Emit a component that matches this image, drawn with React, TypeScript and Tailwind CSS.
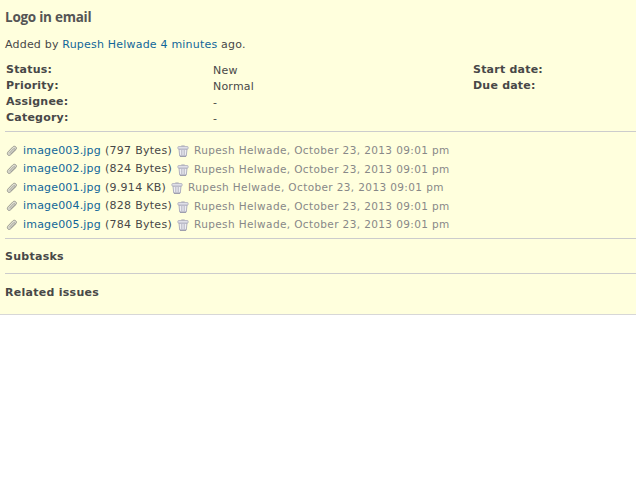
const attachments = [
  { name: "image003.jpg", size: "797 Bytes" },
  { name: "image002.jpg", size: "824 Bytes" },
  { name: "image001.jpg", size: "9.914 KB" },
  { name: "image004.jpg", size: "828 Bytes" },
  { name: "image005.jpg", size: "784 Bytes" },
];

const PaperclipIcon = () => (
  <svg width="12" height="12" viewBox="0 0 12 12" fill="none" className="shrink-0">
    <path
      d="M3.4 8.8 8.6 3.4"
      stroke="#dcdcd0"
      strokeWidth="3.6"
      strokeLinecap="round"
    />
    <path
      d="M3.6 8 7.4 3.9c.9-.9 2.1.1 1.3 1L5 8.7"
      stroke="#999993"
      strokeWidth="0.8"
      strokeLinecap="round"
    />
    <path
      d="M6.8 1.9 2 6.9C.3 9 2.3 11.6 4.5 9.8L10 4.5C11.5 2.5 8.8.1 6.8 1.9Z"
      stroke="#8c8c87"
      strokeWidth="0.9"
    />
  </svg>
);

const TrashIcon = () => (
  <svg width="12" height="12" viewBox="0 0 12 12" fill="none" className="shrink-0">
    <path d="M2 4h8l-.7 7H2.7z" fill="#ededf2" stroke="#b0b0c0" strokeWidth="1" />
    <path d="M4.5 5v5M6 5v5M7.5 5v5" stroke="#a9a9b8" strokeWidth="0.6" />
    <path d="M4.3 1h3.4" stroke="#a3a3b4" />
    <rect x="0.9" y="1.6" width="10.2" height="2.4" rx="0.6" fill="#e4e4ec" stroke="#a6a6b6" strokeWidth="0.8" />
    <path d="M3 11.3h6" stroke="#9292a5" strokeWidth="1" />
  </svg>
);

const Attribute = ({ label, value }: { label: string; value?: string }) => (
  <div className="flex h-4 leading-4">
    <div className="w-[207px] font-bold tracking-[0.22px]">{label}:</div>
    <div className="pt-px tracking-[0.2px]">{value}</div>
  </div>
);

export default function App() {
  return (
    <div className="h-[487px] w-[636px] overflow-hidden bg-white font-['DejaVu_Sans',Verdana,sans-serif] text-[11px] whitespace-nowrap text-[#484848]">
      <div className="h-[315px] border-b border-[#d7d7d7] bg-[#ffffdd] pl-[5px]">
        <h3 className="h-[37px] pt-2 font-['Open_Sans',sans-serif] text-[13.5px] leading-[18px] font-bold tracking-[-0.25px] text-[#555]">
          Logo in email
        </h3>
        <p className="h-[25px] leading-4 tracking-[0.2px]">
          Added by <a className="text-[#116699]">Rupesh Helwade</a>{" "}
          <a className="text-[#116699]">4 minutes</a> ago.
        </p>

        <div className="flex h-[69px] pl-px">
          <div className="w-[467px] shrink-0">
            <Attribute label="Status" value="New" />
            <Attribute label="Priority" value="Normal" />
            <Attribute label="Assignee" value="-" />
            <Attribute label="Category" value="-" />
          </div>
          <div className="min-w-0">
            <Attribute label="Start date" />
            <Attribute label="Due date" />
          </div>
        </div>

        <div className="h-[107px] border-t border-[#ccc] pt-[9.9px]">
          {attachments.map((file) => (
            <div key={file.name} className="flex h-[18.5px] items-center pl-px">
              <span className="-mt-px">
                <PaperclipIcon />
              </span>
              <a className="ml-[5px] tracking-[0.18px] text-[#116699]">{file.name}</a>
              <span className="ml-1 tracking-[0.28px]">({file.size})</span>
              <span className="ml-[5px]">
                <TrashIcon />
              </span>
              <span className="ml-[5px] text-[10.5px] tracking-[0.38px] text-[#888]">
                Rupesh Helwade, October 23, 2013 09:01 pm
              </span>
            </div>
          ))}
        </div>

        <div className="h-[35px] border-t border-[#ccc] pt-[10px] leading-4 font-bold tracking-[0.27px]">
          Subtasks
        </div>
        <div className="border-t border-[#ccc] pt-[11px] leading-4 font-bold tracking-[0.27px]">
          Related issues
        </div>
      </div>
    </div>
  );
}
